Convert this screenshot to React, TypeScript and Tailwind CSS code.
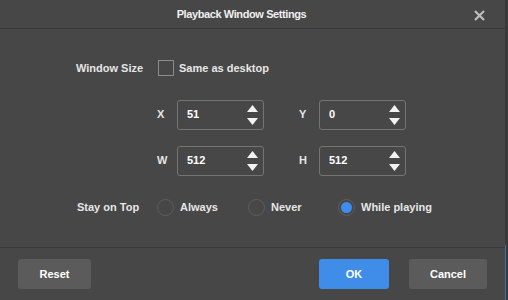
import React from 'react';

const font = { fontFamily: '"Liberation Sans", Arial, sans-serif' };

function Spin({ label, value }: { label: string; value: string }) {
  return (
    <div className="flex items-center">
      <span className="w-[20px] text-[11px] font-bold text-[#e6e6e6]">{label}</span>
      <div className="flex h-[30px] w-[87px] items-center justify-between rounded-[3px] border border-[#747474] pl-[9px] pr-[5px]">
        <span className="text-[11px] font-bold text-white">{value}</span>
        <div className="flex flex-col gap-[6px]">
          <svg width="11" height="7" viewBox="0 0 11 7"><path d="M5.5 0 L11 7 L0 7 Z" fill="#f2f2f2" /></svg>
          <svg width="11" height="7" viewBox="0 0 11 7"><path d="M0 0 L11 0 L5.5 7 Z" fill="#f2f2f2" /></svg>
        </div>
      </div>
    </div>
  );
}

function Radio({ label, checked }: { label: string; checked?: boolean }) {
  return (
    <div className="flex items-center gap-[6px]">
      <div className="flex h-[17px] w-[17px] items-center justify-center rounded-full border border-[#5e5e5e]">
        {checked && <div className="h-[11px] w-[11px] rounded-full bg-[#3f8cf0]" />}
      </div>
      <span className="whitespace-nowrap text-[11px] font-bold text-[#e6e6e6]">{label}</span>
    </div>
  );
}

export default function App() {
  return (
    <div className="flex h-[300px] w-[508px] bg-[#474747]" style={font}>
      <div className="flex flex-1 flex-col">
        <div className="relative flex h-[29px] items-center justify-center border-b border-[#3a3a3a] pr-[22px]">
          <span className="mt-[1px] text-[11px] font-bold tracking-[-0.4px] text-[#f0f0f0]">Playback Window Settings</span>
          <svg className="absolute right-[20px] top-[10px]" width="11" height="11" viewBox="0 0 11 11">
            <path d="M1 1 L10 10 M10 1 L1 10" stroke="#bdbdbd" strokeWidth="2.2" />
          </svg>
        </div>

        <div className="flex flex-1 flex-col pt-[31px]">
          <div className="flex items-center">
            <span className="w-[158px] whitespace-nowrap pl-[76px] text-[11px] font-bold text-[#e6e6e6]">Window Size</span>
            <div className="h-[16px] w-[16px] border border-[#8c8c8c]" />
            <span className="ml-[5px] whitespace-nowrap text-[11px] font-bold text-[#e6e6e6]">Same as desktop</span>
          </div>

          <div className="ml-[157px] mt-[23px] flex gap-[35px]">
            <Spin label="X" value="51" />
            <Spin label="Y" value="0" />
          </div>
          <div className="ml-[157px] mt-[16px] flex gap-[35px]">
            <Spin label="W" value="512" />
            <Spin label="H" value="512" />
          </div>

          <div className="mt-[23px] flex items-center">
            <span className="w-[157px] whitespace-nowrap pl-[77px] text-[11px] font-bold text-[#e6e6e6]">Stay on Top</span>
            <div className="w-[91px]"><Radio label="Always" /></div>
            <div className="w-[90px]"><Radio label="Never" /></div>
            <Radio label="While playing" checked />
          </div>
        </div>

        <div className="flex h-[53px] items-center border-t border-[#3a3a3a] px-[18px]">
          <button className="h-[30px] w-[73px] rounded-[3px] bg-[#5b5b5b] text-[11px] font-bold text-white">Reset</button>
          <div className="flex-1" />
          <button className="h-[30px] w-[70px] rounded-[3px] bg-[#3f8de8] text-[11px] font-bold text-white">OK</button>
          <button className="ml-[20px] h-[30px] w-[78px] rounded-[3px] bg-[#5b5b5b] text-[11px] font-bold text-white">Cancel</button>
        </div>
      </div>
      <div className="flex w-[3px] flex-col bg-[#3a3a3a]">
        <div className="flex-1" />
        <div className="h-[55px] w-[1px] bg-[#3d6fb0]" />
      </div>
    </div>
  );
}
